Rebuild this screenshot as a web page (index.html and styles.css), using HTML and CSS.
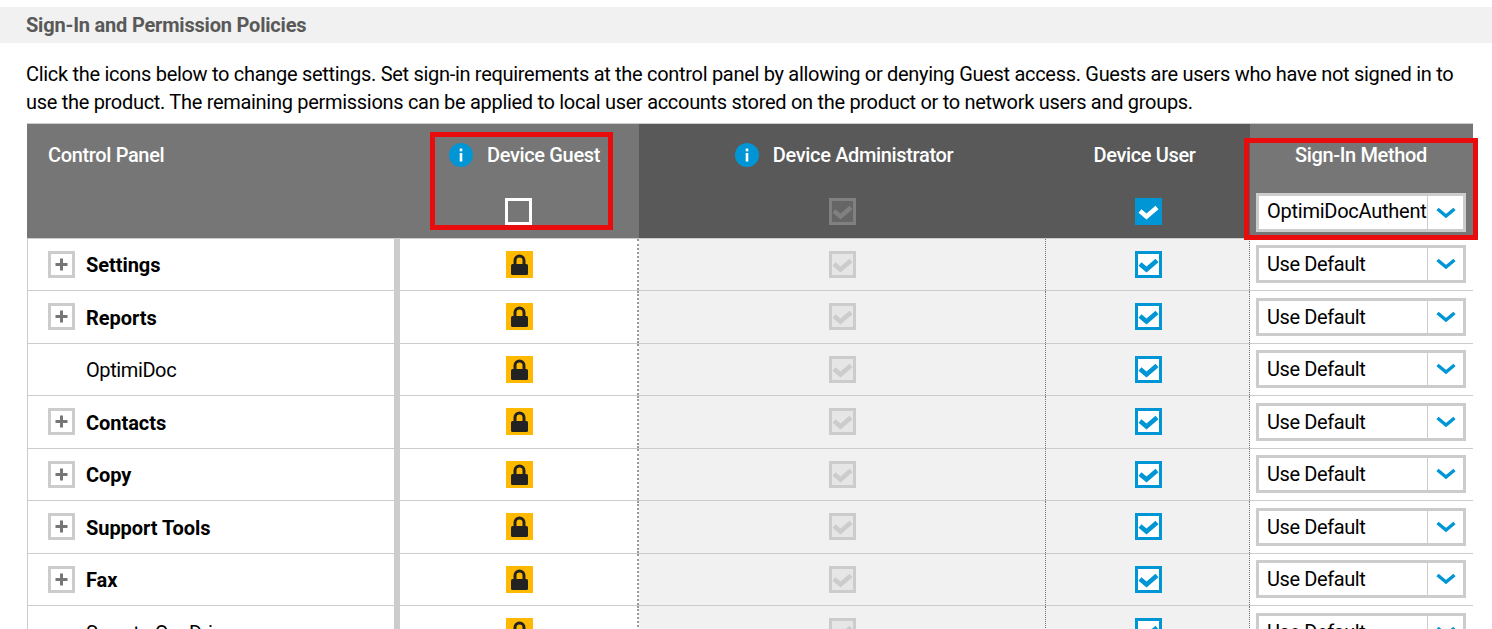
FILE: index.html
```html
<!DOCTYPE html>
<html lang="en">

<head>
    <meta charset="utf-8">
    <title>Sign-In and Permission Policies</title>
    <link rel="stylesheet" href="styles.css">
</head>

<body>

    <svg class="defs" width="0" height="0">
        <symbol id="check" viewBox="0 0 27 27">
            <path d="M5 13l6.500 5.500L22 9.500" fill="none" stroke="currentColor" stroke-width="4.600" />
        </symbol>
        <symbol id="lock" viewBox="0 0 27 27">
            <path d="M9 14V9.500a4.500 4.500 0 0 1 9 0V14" fill="none" stroke="#222" stroke-width="3" />
            <rect x="5" y="13" width="17" height="11" rx="1.500" fill="#222" />
        </symbol>
        <symbol id="chevron" viewBox="0 0 20 12">
            <path d="M1.500 2l8.500 7 8.500-7" fill="none" stroke="#0096d6" stroke-width="3.400" />
        </symbol>
        <symbol id="info" viewBox="0 0 24 24">
            <circle cx="12" cy="12" r="12" fill="#0096d6" />
            <rect x="10.700" y="5.500" width="2.600" height="2.800" fill="#fff" />
            <rect x="10.700" y="10" width="2.600" height="8.500" fill="#fff" />
        </symbol>
        <symbol id="plus" viewBox="0 0 21 21">
            <path d="M10.500 4.500v12M4.500 10.500h12" stroke="#767676" stroke-width="3" />
        </symbol>
    </svg>

    <h2 class="section_title">Sign-In and Permission Policies</h2>

    <p class="intro">Click the icons below to change settings. Set sign-in requirements at the control panel by allowing or denying Guest access. Guests are users who have not signed in to use the product. The remaining permissions can be applied to local user accounts stored on the product or to network users and groups.</p>

    <div class="policy_table">

        <div class="row head_row">
            <div class="cell name_cell">Control Panel</div>
            <div class="cell guest_cell">
                <div class="head_label"><svg class="info_icon"><use href="#info" /></svg>Device Guest</div>
                <span class="box box_empty"></span>
            </div>
            <div class="cell admin_cell">
                <div class="head_label"><svg class="info_icon"><use href="#info" /></svg>Device Administrator</div>
                <span class="box box_head_off"><svg><use href="#check" /></svg></span>
            </div>
            <div class="cell user_cell">
                <div class="head_label head_label_left">Device User</div>
                <span class="box box_head_on"><svg><use href="#check" /></svg></span>
            </div>
            <div class="cell method_cell">
                <div class="head_label head_label_left">Sign-In Method</div>
                <div class="select select_head"><span class="select_text">OptimiDocAuthenticator</span><span class="select_arrow"><svg><use href="#chevron" /></svg></span></div>
            </div>
        </div>

        <div class="row">
            <div class="cell name_cell"><span class="expander"><svg><use href="#plus" /></svg></span><b class="name bold">Settings</b></div>
            <div class="cell guest_cell"><span class="box box_lock"><svg><use href="#lock" /></svg></span></div>
            <div class="cell admin_cell"><span class="box box_off"><svg><use href="#check" /></svg></span></div>
            <div class="cell user_cell"><span class="box box_on"><svg><use href="#check" /></svg></span></div>
            <div class="cell method_cell"><div class="select"><span class="select_text">Use Default</span><span class="select_arrow"><svg><use href="#chevron" /></svg></span></div></div>
        </div>

        <div class="row">
            <div class="cell name_cell"><span class="expander"><svg><use href="#plus" /></svg></span><b class="name bold">Reports</b></div>
            <div class="cell guest_cell"><span class="box box_lock"><svg><use href="#lock" /></svg></span></div>
            <div class="cell admin_cell"><span class="box box_off"><svg><use href="#check" /></svg></span></div>
            <div class="cell user_cell"><span class="box box_on"><svg><use href="#check" /></svg></span></div>
            <div class="cell method_cell"><div class="select"><span class="select_text">Use Default</span><span class="select_arrow"><svg><use href="#chevron" /></svg></span></div></div>
        </div>

        <div class="row">
            <div class="cell name_cell"><span class="expander_space"></span><span class="name">OptimiDoc</span></div>
            <div class="cell guest_cell"><span class="box box_lock"><svg><use href="#lock" /></svg></span></div>
            <div class="cell admin_cell"><span class="box box_off"><svg><use href="#check" /></svg></span></div>
            <div class="cell user_cell"><span class="box box_on"><svg><use href="#check" /></svg></span></div>
            <div class="cell method_cell"><div class="select"><span class="select_text">Use Default</span><span class="select_arrow"><svg><use href="#chevron" /></svg></span></div></div>
        </div>

        <div class="row">
            <div class="cell name_cell"><span class="expander"><svg><use href="#plus" /></svg></span><b class="name bold">Contacts</b></div>
            <div class="cell guest_cell"><span class="box box_lock"><svg><use href="#lock" /></svg></span></div>
            <div class="cell admin_cell"><span class="box box_off"><svg><use href="#check" /></svg></span></div>
            <div class="cell user_cell"><span class="box box_on"><svg><use href="#check" /></svg></span></div>
            <div class="cell method_cell"><div class="select"><span class="select_text">Use Default</span><span class="select_arrow"><svg><use href="#chevron" /></svg></span></div></div>
        </div>

        <div class="row">
            <div class="cell name_cell"><span class="expander"><svg><use href="#plus" /></svg></span><b class="name bold">Copy</b></div>
            <div class="cell guest_cell"><span class="box box_lock"><svg><use href="#lock" /></svg></span></div>
            <div class="cell admin_cell"><span class="box box_off"><svg><use href="#check" /></svg></span></div>
            <div class="cell user_cell"><span class="box box_on"><svg><use href="#check" /></svg></span></div>
            <div class="cell method_cell"><div class="select"><span class="select_text">Use Default</span><span class="select_arrow"><svg><use href="#chevron" /></svg></span></div></div>
        </div>

        <div class="row">
            <div class="cell name_cell"><span class="expander"><svg><use href="#plus" /></svg></span><b class="name bold">Support Tools</b></div>
            <div class="cell guest_cell"><span class="box box_lock"><svg><use href="#lock" /></svg></span></div>
            <div class="cell admin_cell"><span class="box box_off"><svg><use href="#check" /></svg></span></div>
            <div class="cell user_cell"><span class="box box_on"><svg><use href="#check" /></svg></span></div>
            <div class="cell method_cell"><div class="select"><span class="select_text">Use Default</span><span class="select_arrow"><svg><use href="#chevron" /></svg></span></div></div>
        </div>

        <div class="row">
            <div class="cell name_cell"><span class="expander"><svg><use href="#plus" /></svg></span><b class="name bold">Fax</b></div>
            <div class="cell guest_cell"><span class="box box_lock"><svg><use href="#lock" /></svg></span></div>
            <div class="cell admin_cell"><span class="box box_off"><svg><use href="#check" /></svg></span></div>
            <div class="cell user_cell"><span class="box box_on"><svg><use href="#check" /></svg></span></div>
            <div class="cell method_cell"><div class="select"><span class="select_text">Use Default</span><span class="select_arrow"><svg><use href="#chevron" /></svg></span></div></div>
        </div>

        <div class="row">
            <div class="cell name_cell"><span class="expander_space"></span><span class="name">Scan to OneDrive</span></div>
            <div class="cell guest_cell"><span class="box box_lock"><svg><use href="#lock" /></svg></span></div>
            <div class="cell admin_cell"><span class="box box_off"><svg><use href="#check" /></svg></span></div>
            <div class="cell user_cell"><span class="box box_on"><svg><use href="#check" /></svg></span></div>
            <div class="cell method_cell"><div class="select"><span class="select_text">Use Default</span><span class="select_arrow"><svg><use href="#chevron" /></svg></span></div></div>
        </div>

        <div class="mark mark_guest"></div>
        <div class="mark mark_method"></div>
    </div>

</body>

</html>
```

FILE: styles.css
```css
html,
body {
    margin: 0px;
    padding: 0px;
    height: 100%;
    background-color: #FFF;
    color: #000;
    font-family: "Roboto", sans-serif;
    font-size: 20px;
    letter-spacing: -0.4px;
    overflow: hidden;
}

.defs {
    position: absolute;
}

.section_title {
    margin: 7px 0px 0px;
    height: 36px;
    padding-left: 26px;
    background-color: #F1F1F1;
    color: #595959;
    font-size: 20px;
    font-weight: bold;
    letter-spacing: -0.2px;
    line-height: 36px;
}

.intro {
    margin: 17px 26px 0px;
    height: 63px;
    font-size: 20px;
    letter-spacing: -0.3px;
    line-height: 28px;
}

.policy_table {
    position: relative;
    margin-left: 27px;
    width: 1446px;
}

.row {
    display: grid;
    grid-template-columns: 373px 239px 407px 204px 223px;
    height: 52.5px;
    box-sizing: border-box;
    border-bottom: 1px solid #CCC;
}

.cell {
    box-sizing: border-box;
    display: flex;
    align-items: center;
    justify-content: center;
}

.name_cell {
    justify-content: flex-start;
    padding-left: 20px;
    border-left: 1px solid #CCC;
    border-right: 6px solid #CCC;
}

.name {
    padding-top: 2px;
}

.bold {
    letter-spacing: -0.05px;
}

.guest_cell {
    padding-left: 2px;
    border-right: 2px dotted #999;
}

.admin_cell {
    padding-left: 1px;
    background-color: #F1F1F1;
    border-right: 1px dotted #777;
}

.user_cell {
    padding-left: 1px;
    background-color: #F1F1F1;
    border-right: 1px dotted #777;
}

.method_cell {
    padding-left: 6px;
    justify-content: flex-start;
}

.expander {
    box-sizing: border-box;
    flex: none;
    width: 27px;
    height: 27px;
    margin-right: 11px;
    background-color: #FFF;
    border: 3px solid #CCC;
}

.expander svg {
    display: block;
    width: 21px;
    height: 21px;
}

.expander_space {
    flex: none;
    width: 38px;
}

/* header row */

.head_row {
    height: 115.5px;
    border-top: 1px solid #CCC;
    border-bottom: 1px solid #CCC;
    color: #FFF;
    font-weight: 500;
    letter-spacing: -0.35px;
}

.head_row .cell {
    position: relative;
    border: 0px;
    padding-left: 0px;
    background-color: #767676;
    flex-direction: column;
    justify-content: flex-start;
    padding-top: 18px;
}

.head_row .name_cell {
    align-items: flex-start;
    padding-top: 19px;
    padding-left: 21px;
}

.head_row .admin_cell,
.head_row .user_cell {
    background-color: #595959;
}

.head_row .method_cell {
    align-items: flex-start;
    padding-left: 6px;
}

.head_row .method_cell .head_label {
    align-self: center;
}

.head_label {
    display: flex;
    align-items: center;
    height: 26px;
    margin-bottom: 30px;
}

.head_label_left {
    margin-right: 7px;
}

.info_icon {
    width: 24px;
    height: 24px;
    margin-left: 10px;
    margin-right: 14px;
}

.admin_cell .info_icon {
    margin-left: 3px;
}

/* checkboxes */

.box {
    box-sizing: border-box;
    display: block;
    flex: none;
    width: 27px;
    height: 27px;
}

.box svg {
    display: block;
    width: 100%;
    height: 100%;
}

.box_empty {
    border: 3px solid #FFF;
    margin-right: 2px;
}

.box_lock {
    background-color: #FFB900;
}

.box_on {
    background-color: #FFF;
    border: 3px solid #0096D6;
    color: #0096D6;
}

.box_off {
    background-color: #E6E6E6;
    border: 3px solid #CCC;
    color: #CCC;
}

.box_head_on {
    background-color: #0096D6;
    color: #FFF;
}

.box_head_off {
    background-color: #666;
    border: 3px solid #808080;
    color: #808080;
}

.box_on svg,
.box_off svg,
.box_head_off svg {
    margin: -3px;
    width: 27px;
    height: 27px;
}

/* select */

.select {
    box-sizing: border-box;
    display: flex;
    width: 210px;
    height: 38px;
    background-color: #FFF;
    border: 3px solid #CCC;
    color: #000;
    font-weight: normal;
    letter-spacing: -0.4px;
}

.select_head {
    height: 39px;
    margin-top: -5px;
    letter-spacing: -0.25px;
}

.select_text {
    width: 168px;
    padding-left: 8px;
    box-sizing: border-box;
    line-height: 32px;
    white-space: nowrap;
    overflow: hidden;
}

.select_head .select_text {
    line-height: 30px;
}

.select_arrow {
    flex: 1;
    display: flex;
    align-items: center;
    justify-content: center;
    border-left: 1px solid #CCC;
}

.select_arrow svg {
    width: 20px;
    height: 12px;
}

/* red marks */

.mark {
    position: absolute;
    box-sizing: border-box;
    border: 5px solid #E80C0C;
}

.mark_guest {
    left: 403px;
    top: 9px;
    width: 183px;
    height: 98px;
}

.mark_method {
    left: 1217px;
    top: 15px;
    width: 234px;
    height: 102px;
}
```
